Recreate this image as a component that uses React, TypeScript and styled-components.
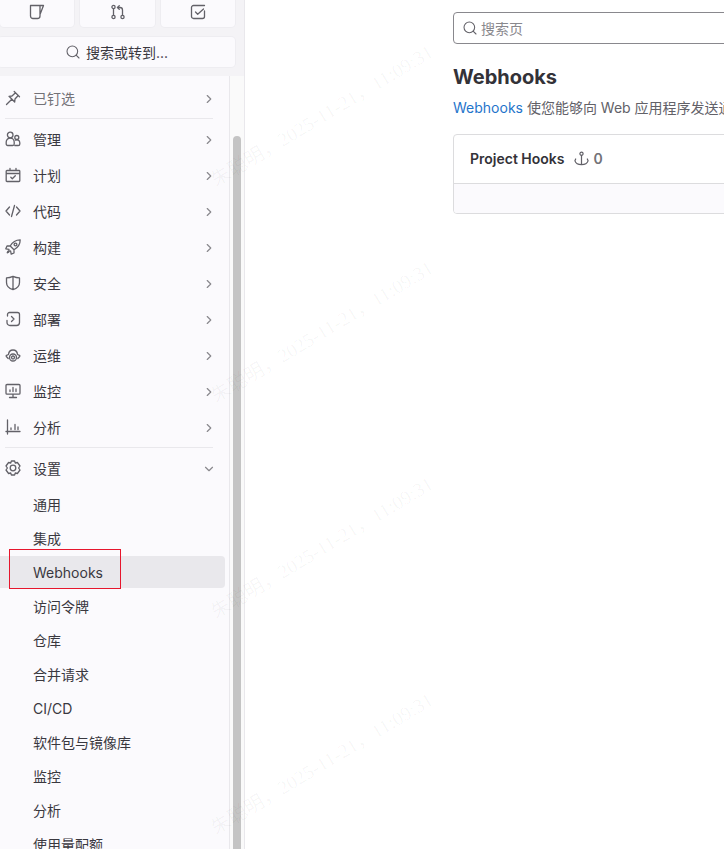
import React from "react";
import styled, { createGlobalStyle } from "styled-components";
import { ChevronRight, ChevronDown, Search } from "lucide-react";

const FONT = `Inter, "Noto Sans CJK SC", "Liberation Sans", sans-serif`;

const GlobalStyle = createGlobalStyle`
  html, body {
    margin: 0;
    padding: 0;
    height: 849px;
    overflow: hidden;
    background: #fff;
  }
  body {
    font-family: ${FONT};
    color: #3a383f;
  }
`;

const Page = styled.div`
  position: relative;
  display: flex;
  width: 724px;
  height: 849px;
  overflow: hidden;
  background: #fff;
`;

const Sidebar = styled.aside`
  flex: none;
  width: 245px;
  height: 849px;
  display: flex;
  flex-direction: column;
  box-sizing: border-box;
  border-right: 1px solid #e9e8ec;
  background: #f4f3f6;
  overflow: hidden;
`;

const TopPanel = styled.div`
  flex: none;
  height: 76px;
  box-sizing: border-box;
  padding-right: 9px;
  display: flex;
  flex-direction: column;
  gap: 10px;
`;

const ActionRow = styled.div`
  display: flex;
  justify-content: flex-end;
  gap: 6px;
`;

const ActionButton = styled.div`
  width: 75px;
  height: 27px;
  display: flex;
  align-items: flex-end;
  justify-content: center;
  padding-bottom: 7px;
  box-sizing: border-box;
  background: #fbfafd;
  border-radius: 0 0 4px 4px;
  box-shadow: 0 0 0 1px #eeedf1;
  color: #626168;
`;

const SearchButton = styled.div`
  height: 30px;
  margin-left: -2px;
  padding-bottom: 1px;
  box-sizing: border-box;
  display: flex;
  align-items: center;
  justify-content: center;
  gap: 5px;
  background: #fbfafd;
  border-radius: 4px;
  box-shadow: 0 0 0 1px #eeedf1;
  font-size: 14px;
  color: #3a383f;
  svg {
    color: #626168;
  }
`;

const ScrollArea = styled.div`
  flex: 1;
  min-height: 0;
  display: flex;
  background: #fbfafd;
`;

const Nav = styled.nav`
  flex: 1;
  min-width: 0;
  padding: 4px 4px 0 0;
  overflow: hidden;
`;

const Track = styled.div`
  flex: none;
  width: 15px;
  box-sizing: border-box;
  padding: 60px 3px 0 3px;
  border-left: 1px solid #e9e8ec;
  background: #fafafa;
`;

const Thumb = styled.div`
  height: 100%;
  background: #c4c4c4;
  border-radius: 4px 4px 0 0;
`;

const NavRow = styled.div<{ $muted?: boolean }>`
  height: 36px;
  display: flex;
  align-items: center;
  padding-left: 5px;
  font-size: 14px;
  color: ${(p) => (p.$muted ? "#737278" : "#3a383f")};
`;

const NavIcon = styled.span`
  flex: none;
  width: 16px;
  height: 16px;
  margin-right: 12px;
  color: #626168;
  svg {
    display: block;
  }
`;

const NavLabel = styled.span`
  flex: 1;
`;

const NavChevron = styled.span`
  flex: none;
  width: 14px;
  height: 14px;
  margin: 1px 9px 0 0;
  color: #89888d;
  svg {
    display: block;
  }
`;

const Divider = styled.div`
  height: 1px;
  margin: 2px 12px 2px 5px;
  background: #e9e8ec;
`;

const SubList = styled.div`
  padding-top: 2px;
`;

const SubRow = styled.div<{ $active?: boolean }>`
  height: 32px;
  margin: 0 0 2px -8px;
  padding-left: 41px;
  display: flex;
  align-items: center;
  font-size: 14px;
  border-radius: 4px;
  background: ${(p) => (p.$active ? "#e9e8ec" : "transparent")};
`;

const Highlight = styled.div`
  position: absolute;
  left: 9px;
  top: 549px;
  width: 112px;
  height: 40px;
  box-sizing: border-box;
  border: 1px solid #e6162d;
  pointer-events: none;
`;

const Main = styled.main`
  flex: none;
  width: 479px;
  padding: 12px 0 0 208px;
  box-sizing: border-box;
  margin-right: -300px;
`;

const Content = styled.div`
  width: 600px;
`;

const PageSearch = styled.div`
  height: 32px;
  display: flex;
  align-items: center;
  gap: 3px;
  box-sizing: border-box;
  padding-left: 8px;
  border: 1px solid #89888d;
  border-radius: 4px;
  font-size: 14px;
  color: #89888d;
  svg {
    color: #626168;
  }
`;

const Title = styled.h1`
  margin: 20px 0 0;
  font-size: 20px;
  line-height: 26px;
  font-weight: 700;
  color: #333238;
`;

const Intro = styled.p`
  margin: 8px 0 0;
  font-size: 14px;
  line-height: 20px;
  color: #626168;
  white-space: nowrap;
`;

const IntroLink = styled.span`
  color: #1f75cb;
`;

const Card = styled.section`
  margin-top: 16px;
  border: 1px solid #dcdcde;
  border-radius: 4px;
  overflow: hidden;
`;

const CardHeader = styled.header`
  height: 49px;
  display: flex;
  align-items: center;
  padding: 0 0 2px 16px;
  box-sizing: border-box;
  border-bottom: 1px solid #dcdcde;
  font-size: 14px;
  font-weight: 600;
  color: #333238;
`;

const HookCount = styled.span`
  display: inline-flex;
  align-items: center;
  gap: 5px;
  margin-left: 9px;
  color: #737278;
  svg {
    color: #626168;
  }
`;

const CardBody = styled.div`
  height: 29px;
  background: #fbfafd;
`;

const Watermark = styled.div<{ $x: number; $y: number }>`
  position: absolute;
  left: ${(p) => p.$x}px;
  top: ${(p) => p.$y}px;
  font-family: "Liberation Serif", "Noto Sans CJK SC", serif;
  font-size: 19.4px;
  line-height: 24px;
  white-space: nowrap;
  color: rgba(0, 0, 0, 0.04);
  transform: rotate(-31deg);
  transform-origin: left center;
  pointer-events: none;
`;

type IconProps = { children: React.ReactNode; size?: number };

const Glyph = ({ children, size = 16 }: IconProps) => (
  <svg
    width={size}
    height={size}
    viewBox="0 0 16 16"
    fill="none"
    stroke="currentColor"
    strokeWidth="1.3"
    strokeLinecap="round"
    strokeLinejoin="round"
  >
    {children}
  </svg>
);

const IssueIcon = () => (
  <Glyph>
    <path d="M1.500 1.500H11v10.500a2.500 2.500 0 0 1-2.500 2.500H4A2.500 2.500 0 0 1 1.500 12zM11 1.500h3.500L11 10.500" />
  </Glyph>
);

const MergeIcon = () => (
  <Glyph>
    <circle cx="3.500" cy="3" r="1.600" />
    <circle cx="3.500" cy="13" r="1.600" />
    <circle cx="12.500" cy="13" r="1.600" />
    <path d="M3.500 4.600v6.800M12.500 11.400V6a2.500 2.500 0 0 0-2.500-2.500H7.500M9.300 1.600 7.400 3.500l1.900 1.900" />
  </Glyph>
);

const TodoIcon = () => (
  <Glyph>
    <path d="M14.500 7v5.500a2 2 0 0 1-2 2h-9a2 2 0 0 1-2-2v-9a2 2 0 0 1 2-2h11M5.500 8l2.200 2.200L13.500 5" />
  </Glyph>
);

const PinIcon = () => (
  <Glyph>
    <path d="M9.200 1.500l5.300 5.300M10.500 2.800 7 6l-3 .3 5.700 5.700.3-3 3.200-3.500M6.800 9.200 1.500 14.500" />
  </Glyph>
);

const ManageIcon = () => (
  <Glyph>
    <circle cx="5.200" cy="4" r="2.800" />
    <path d="M1.200 11a4 4 0 0 1 8 0v2a1.500 1.500 0 0 1-1.500 1.500h-5A1.500 1.500 0 0 1 1.200 13z" />
    <circle cx="11.800" cy="6.500" r="2" />
    <path d="M9.800 14.500h3.400a1.600 1.600 0 0 0 1.600-1.600v-1.200a3 3 0 0 0-4.400-2.600" />
  </Glyph>
);

const PlanIcon = () => (
  <Glyph>
    <path d="M2 3.500h12a.8.8 0 0 1 .8.8v9.400a.8.8 0 0 1-.8.8H2a.8.8 0 0 1-.8-.8V4.300a.8.8 0 0 1 .8-.8zM1.200 6.500h13.600M5 1.500v2M11 1.500v2M5.800 10.300l1.500 1.500 3-3" />
  </Glyph>
);

const CodeIcon = () => (
  <Glyph>
    <path d="M4.500 4 1 8l3.500 4M11.500 4 15 8l-3.500 4M9.500 2.500l-3 11" />
  </Glyph>
);

const BuildIcon = () => (
  <Glyph>
    <path d="M15.200.8C11 .8 7.500 2.800 5.200 7L9 10.800c4.200-2.300 6.200-5.800 6.200-10zM5.200 7H2L.8 9.800l3.200.6M9 10.800V14l-2.800 1.200-.6-3.200M4 11.500c-1 .5-1.600 1.400-1.800 2.300.9-.2 1.800-.8 2.300-1.800" />
    <circle cx="10.500" cy="5.500" r="1.400" />
  </Glyph>
);

const ShieldIcon = () => (
  <Glyph>
    <path d="M8 1.300c2.200 1 4.400 1.500 6.500 1.600v4.600c0 3.300-2.400 5.900-6.500 7.200-4.100-1.300-6.500-3.900-6.500-7.200V2.900C3.600 2.800 5.800 2.300 8 1.300zM8 1.300v13.400" />
  </Glyph>
);

const DeployIcon = () => (
  <Glyph>
    <path d="M2.500 5V3.500a2 2 0 0 1 2-2h8a2 2 0 0 1 2 2v8a3 3 0 0 1-3 3H5a3 3 0 0 1-3-3V9.500M6.500 5.500 9 8l-2.500 2.500" />
  </Glyph>
);

const OperateIcon = () => (
  <Glyph>
    <path d="M3.200 11.500 1.300 9.500c-.3-.5-.1-1 .3-1.200l1.900-.8C3.800 4.500 5.500 3 8 3s4.200 1.500 4.500 4.500l1.900.8c.4.200.6.700.3 1.200l-1.900 2" />
    <circle cx="8" cy="10.500" r="3.500" />
    <path d="M8 8.800l1.600 1.200-.6 1.900H7l-.6-1.900z" />
  </Glyph>
);

const MonitorIcon = () => (
  <Glyph>
    <path d="M2 1.500h12a1 1 0 0 1 1 1v7.700a1 1 0 0 1-1 1H2a1 1 0 0 1-1-1V2.500a1 1 0 0 1 1-1zM4.500 14.500h7M8 11.200v3.300M5 8.500V7M8 8.500V4.500M11 8.500V6" />
  </Glyph>
);

const AnalyzeIcon = () => (
  <Glyph>
    <path d="M2.500 1v14M1 12.500h14M6 10.500V9M10 10.500V5.500M13 10.500V8" />
  </Glyph>
);

const SettingsIcon = () => (
  <Glyph>
    <path d="M6.400 1h3.200l.7 2 2.100-.5L15 6l-1.400 2L15 10l-2.600 3.500-2.100-.5-.7 2H6.400l-.7-2-2.100.5L1 10l1.400-2L1 6l2.600-3.500 2.100.5z" />
    <circle cx="8" cy="8" r="2.800" />
  </Glyph>
);

const AnchorIcon = () => (
  <Glyph size={15}>
    <circle cx="8" cy="3" r="1.700" />
    <path d="M8 4.700v9.800M1.800 8.500 1 10.500c.8 2.500 3.500 4 7 4s6.200-1.500 7-4l-.8-2" />
  </Glyph>
);

type NavEntry = { label: string; icon: React.ReactNode };

const sections: NavEntry[] = [
  { label: "管理", icon: <ManageIcon /> },
  { label: "计划", icon: <PlanIcon /> },
  { label: "代码", icon: <CodeIcon /> },
  { label: "构建", icon: <BuildIcon /> },
  { label: "安全", icon: <ShieldIcon /> },
  { label: "部署", icon: <DeployIcon /> },
  { label: "运维", icon: <OperateIcon /> },
  { label: "监控", icon: <MonitorIcon /> },
  { label: "分析", icon: <AnalyzeIcon /> }
];

const settingsItems = [
  "通用",
  "集成",
  "Webhooks",
  "访问令牌",
  "仓库",
  "合并请求",
  "CI/CD",
  "软件包与镜像库",
  "监控",
  "分析",
  "使用量配额"
];

const marks = [
  { x: 213, y: 170 },
  { x: 213, y: 386 },
  { x: 213, y: 602 },
  { x: 213, y: 818 }
];

const App = () => (
  <Page>
    <GlobalStyle />
    <Sidebar>
      <TopPanel>
        <ActionRow>
          <ActionButton>
            <IssueIcon />
          </ActionButton>
          <ActionButton>
            <MergeIcon />
          </ActionButton>
          <ActionButton>
            <TodoIcon />
          </ActionButton>
        </ActionRow>
        <SearchButton>
          <Search size={16} strokeWidth={1.6} />
          搜索或转到...
        </SearchButton>
      </TopPanel>
      <ScrollArea>
        <Nav>
          <NavRow $muted>
            <NavIcon>
              <PinIcon />
            </NavIcon>
            <NavLabel>已钉选</NavLabel>
            <NavChevron>
              <ChevronRight size={14} />
            </NavChevron>
          </NavRow>
          <Divider />
          {sections.map((s) => (
            <NavRow key={s.label}>
              <NavIcon>{s.icon}</NavIcon>
              <NavLabel>{s.label}</NavLabel>
              <NavChevron>
                <ChevronRight size={14} />
              </NavChevron>
            </NavRow>
          ))}
          <Divider />
          <NavRow>
            <NavIcon>
              <SettingsIcon />
            </NavIcon>
            <NavLabel>设置</NavLabel>
            <NavChevron>
              <ChevronDown size={14} />
            </NavChevron>
          </NavRow>
          <SubList>
            {settingsItems.map((item) => (
              <SubRow key={item} $active={item === "Webhooks"}>
                {item}
              </SubRow>
            ))}
          </SubList>
        </Nav>
        <Track>
          <Thumb />
        </Track>
      </ScrollArea>
    </Sidebar>
    <Main>
      <Content>
        <PageSearch>
          <Search size={16} strokeWidth={1.6} />
          搜索页
        </PageSearch>
        <Title>Webhooks</Title>
        <Intro>
          <IntroLink>Webhooks</IntroLink> 使您能够向 Web 应用程序发送通知
        </Intro>
        <Card>
          <CardHeader>
            Project Hooks
            <HookCount>
              <AnchorIcon />0
            </HookCount>
          </CardHeader>
          <CardBody />
        </Card>
      </Content>
    </Main>
    <Highlight />
    {marks.map((m) => (
      <Watermark key={m.y} $x={m.x} $y={m.y}>
        朱聪明，2025-11-21，11:09:31
      </Watermark>
    ))}
  </Page>
);

export default App;
